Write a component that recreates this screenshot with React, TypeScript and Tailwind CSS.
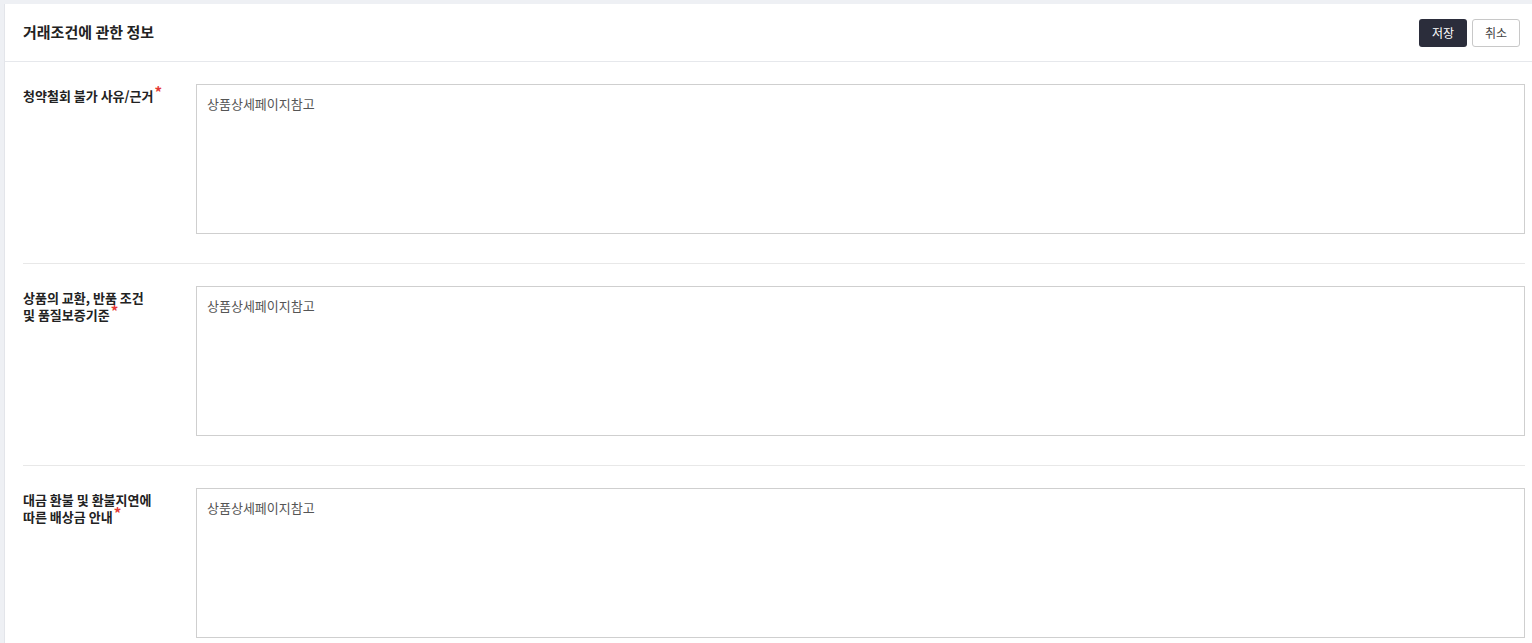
const rows = [
  { label: ['청약철회 불가 사유/근거'], value: '상품상세페이지참고' },
  { label: ['상품의 교환, 반품 조건', '및 품질보증기준'], value: '상품상세페이지참고' },
  { label: ['대금 환불 및 환불지연에', '따른 배상금 안내'], value: '상품상세페이지참고' },
];

export default function App() {
  return (
    <div
      className="h-[643px] overflow-hidden bg-[#eef0f4] pl-1 pt-1"
      style={{ fontFamily: '"Noto Sans CJK KR", "Noto Sans", sans-serif' }}
    >
      <div className="bg-white h-full border-l border-[#e3e5ea]">
        <div className="flex items-center justify-between h-[58px] pl-[18px] pr-[12px] border-b border-[#e6e8ec]">
          <h2 className="text-[15px] font-bold text-[#222]">거래조건에 관한 정보</h2>
          <div className="flex gap-[5px]">
            <button className="h-[28px] w-[48px] rounded-[3px] bg-[#2b2d3b] text-white text-[12px]">저장</button>
            <button className="h-[28px] w-[48px] rounded-[3px] border border-[#c8c8c8] bg-white text-[#444] text-[12px]">취소</button>
          </div>
        </div>
        <div className="pl-[18px] pr-[7px]">
          {rows.map((row, i) => (
            <div key={i} className={`flex pt-[22px] pb-[29px] ${i < rows.length - 1 ? 'border-b border-[#e8e8e8]' : ''}`}>
              <div className="w-[173px] shrink-0 pt-[3px] text-[13px] font-bold leading-[17px] text-[#222]">
                {row.label.map((line, j) => (
                  <div key={j} className="flex items-start">
                    <span>{line}</span>
                    {j === row.label.length - 1 && (
                      <span className="ml-[1px] text-[15px] leading-[10px] text-[#e53935]">*</span>
                    )}
                  </div>
                ))}
              </div>
              <textarea
                readOnly
                defaultValue={row.value}
                className="flex-1 h-[150px] resize-none border border-[#cfcfcf] px-[10px] py-[10px] text-[13px] leading-[18px] text-[#555] outline-none"
              />
            </div>
          ))}
        </div>
      </div>
    </div>
  );
}
